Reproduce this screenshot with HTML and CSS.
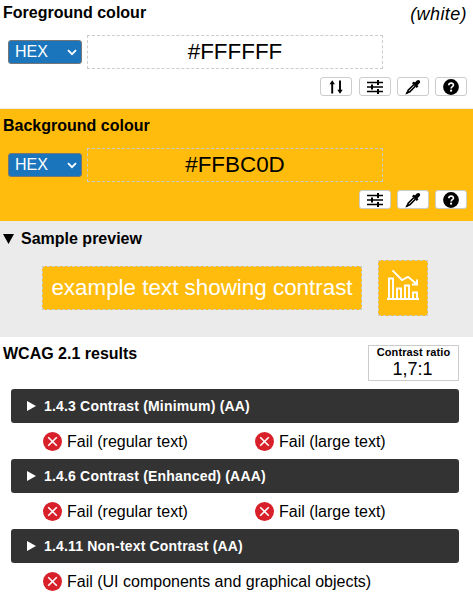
FILE: index.html
```html
<!DOCTYPE html>
<html lang="en">
<head>
<meta charset="utf-8">
<title>Colour Contrast Analyser</title>
<link rel="stylesheet" href="styles.css">
</head>
<body>
<svg class="defs" aria-hidden="true">
  <symbol id="chevron" viewBox="0 0 10 7"><path d="M1 1.2l4 4 4-4" fill="none" stroke="#fff" stroke-width="1.8"/></symbol>
  <symbol id="swap" viewBox="0 0 14 14"><path d="M3.200 13.500V3M11 .5v10" fill="none" stroke="#000" stroke-width="1.900"/><path d="M.5 4.200L3.200.2l2.700 4zM8.300 9.800l2.700 4 2.700-4z"/></symbol>
  <symbol id="sliders" viewBox="0 0 16 14"><path d="M0 2.500h9.500M12.500 2.500H16M0 7h3.500M6.500 7H16M0 11.500h9.500M12.500 11.500H16M9 2.500h4M3 7h4M9 11.500h4" fill="none" stroke="#000" stroke-width="1.400"/><path d="M10 0h2v5h-2zM4 4.500h2v5H4zM10 9h2v5h-2z"/></symbol>
  <symbol id="dropper" viewBox="0 0 16 16"><path d="M8.700 5.700L3.200 11.200 2.200 13.800 4.800 12.800 10.300 7.300" fill="none" stroke="#000" stroke-width="1.600"/><path d="M7 4.300l1.800-1.800 1.100 1L11.800 1.600c2-1.900 4.600.7 2.700 2.700l-2 1.900 1 1.100-1.800 1.800zM.4 15.600l1-2.600 1.600 1.600z"/></symbol>
  <symbol id="help" viewBox="0 0 16 16"><circle cx="8" cy="8" r="7.900"/><path d="M5.800 6.300c.1-3 4.800-2.800 4.600-.1-.1 1.500-2.200 1.500-2.200 3.200" fill="none" stroke="#fff" stroke-width="1.700"/><circle cx="8.100" cy="11.700" r="1.100" fill="#fff"/></symbol>
  <symbol id="fail" viewBox="0 0 19 19"><circle cx="9.500" cy="9.500" r="9.500" fill="#d8202a"/><path d="M5.200 5.200l8.600 8.600M13.800 5.200l-8.600 8.600" stroke="#fff" stroke-width="1.600"/></symbol>
</svg>

<section class="colour foreground">
  <header class="colour-head"><h2>Foreground colour</h2><em>(white)</em></header>
  <div class="entry">
    <div class="format"><span>HEX</span><svg class="chevron"><use href="#chevron"/></svg></div>
    <div class="value">#FFFFFF</div>
  </div>
  <div class="tools">
    <button class="swap"><svg class="i-swap"><use href="#swap"/></svg></button>
    <button><svg class="i-sliders"><use href="#sliders"/></svg></button>
    <button><svg class="i-round"><use href="#dropper"/></svg></button>
    <button><svg class="i-round"><use href="#help"/></svg></button>
  </div>
</section>

<section class="colour background">
  <header class="colour-head"><h2>Background colour</h2></header>
  <div class="entry">
    <div class="format"><span>HEX</span><svg class="chevron"><use href="#chevron"/></svg></div>
    <div class="value">#FFBC0D</div>
  </div>
  <div class="tools">
    <button><svg class="i-sliders"><use href="#sliders"/></svg></button>
    <button><svg class="i-round"><use href="#dropper"/></svg></button>
    <button><svg class="i-round"><use href="#help"/></svg></button>
  </div>
</section>

<section class="preview">
  <h2><svg class="tri-down" viewBox="0 0 11 10"><path d="M0 0h11L5.500 10z"/></svg>Sample preview</h2>
  <div class="samples">
    <div class="sample-text">example text showing contrast</div>
    <div class="sample-icon">
      <svg viewBox="0 0 32 32" fill="none" stroke="#fff" stroke-width="1.900">
        <path d="M0 30h32M2 30V9.500h4V30M10 30V19.500h4V30M18 30V16.500h4V30M26 30v-6.500h4V30M5.500 1.300l9.500 9.700 6-3.200 9 7.400M25 15.500h5v-5"/>
      </svg>
    </div>
  </div>
</section>

<section class="results">
  <header class="results-head">
    <h2>WCAG 2.1 results</h2>
    <div class="ratio"><div class="ratio-label">Contrast ratio</div><div class="ratio-value">1,7:1</div></div>
  </header>
  <div class="criterion"><svg class="tri-right" viewBox="0 0 9 10"><path d="M0 0l9 5-9 5z"/></svg><span>1.4.3 Contrast (Minimum) (AA)</span></div>
  <div class="outcomes">
    <div class="outcome"><svg><use href="#fail"/></svg>Fail (regular text)</div>
    <div class="outcome"><svg><use href="#fail"/></svg>Fail (large text)</div>
  </div>
  <div class="criterion"><svg class="tri-right" viewBox="0 0 9 10"><path d="M0 0l9 5-9 5z"/></svg><span>1.4.6 Contrast (Enhanced) (AAA)</span></div>
  <div class="outcomes">
    <div class="outcome"><svg><use href="#fail"/></svg>Fail (regular text)</div>
    <div class="outcome"><svg><use href="#fail"/></svg>Fail (large text)</div>
  </div>
  <div class="criterion"><svg class="tri-right" viewBox="0 0 9 10"><path d="M0 0l9 5-9 5z"/></svg><span>1.4.11 Non-text Contrast (AA)</span></div>
  <div class="outcomes">
    <div class="outcome wide"><svg><use href="#fail"/></svg>Fail (UI components and graphical objects)</div>
  </div>
</section>
</body>
</html>
```
FILE: styles.css
```css
* { box-sizing: border-box; }
body {
  margin: 0;
  height: 597px;
  overflow: hidden;
  background: #fff;
  color: #000;
  font: 16px/18px "Liberation Sans", Arial, sans-serif;
}
.defs { display: none; }
svg { display: block; flex: none; }
h2 { margin: 0; font-size: 16px; line-height: 18px; font-weight: bold; }

.colour { height: 109px; padding: 4px 6px 0 3px; }
.foreground { border-bottom: 1px solid #ebebeb; }
.background { height: 112px; padding-top: 8px; background: #ffbc0d; }
.colour-head { display: flex; justify-content: space-between; height: 31px; }
.colour-head em { font-size: 18px; line-height: 21px; letter-spacing: 0.4px; }
.entry { display: flex; align-items: center; gap: 5px; padding-left: 5px; }
.format {
  display: flex;
  align-items: center;
  justify-content: space-between;
  width: 74px;
  height: 24px;
  padding: 0 4px 0 6px;
  border: 1px solid #767676;
  border-radius: 3px;
  background: #1b75bc;
  color: #fff;
  font-size: 16px;
}
.chevron { width: 10px; height: 7px; }
.value {
  width: 296px;
  height: 34px;
  border: 1px dashed #ccc;
  font-size: 22.4px;
  line-height: 31px;
  text-align: center;
}
.tools { display: flex; justify-content: flex-end; gap: 6px; margin-top: 8px; }
.tools button {
  display: flex;
  align-items: center;
  justify-content: center;
  width: 32px;
  height: 19px;
  padding: 0;
  border: 1px solid #ccc;
  border-radius: 3px;
  background: #fff;
}
.swap { margin-right: 1px; }
.i-swap { width: 14px; height: 14px; }
.i-sliders { width: 16px; height: 14px; }
.i-round { width: 16px; height: 16px; }

.preview { height: 116px; padding: 9px 3px 0; background: #ebebeb; }
.preview h2 { display: flex; align-items: center; gap: 7px; }
.tri-down { width: 11px; height: 10px; }
.samples { display: flex; align-items: center; gap: 16px; margin: 12px 0 0 39px; }
.sample-text, .sample-icon { border: 1px dashed #ccc; background: #ffbc0d; color: #fff; }
.sample-text { width: 320px; height: 44px; font-size: 22.4px; line-height: 41px; text-align: center; white-space: nowrap; }
.sample-icon { display: flex; justify-content: center; width: 50px; height: 56px; padding-top: 8px; }
.sample-icon svg { width: 32px; height: 32px; }

.results { padding: 8px 14px 0 11px; }
.results-head { display: flex; justify-content: space-between; height: 44px; margin-left: -8px; }
.ratio { width: 91px; height: 36px; border: 1px solid #ccc; text-align: center; }
.ratio-label { font-size: 11px; line-height: 13px; font-weight: bold; letter-spacing: 0.1px; }
.ratio-value { font-size: 18px; line-height: 20px; padding-right: 2px; }
.criterion {
  display: flex;
  align-items: center;
  gap: 8px;
  height: 34px;
  padding-left: 16px;
  border-radius: 3px;
  background: #333;
  color: #fff;
  font-size: 14px;
  font-weight: bold;
  letter-spacing: 0.18px;
}
.tri-right { width: 9px; height: 10px; fill: #fff; }
.outcomes { display: grid; grid-template-columns: 212px 1fr; height: 36px; padding-left: 32px; }
.outcome { display: flex; align-items: center; gap: 5px; padding-top: 1px; white-space: nowrap; }
.outcome svg { width: 19px; height: 19px; margin-top: -1px; }
.wide { grid-column: span 2; }
```
